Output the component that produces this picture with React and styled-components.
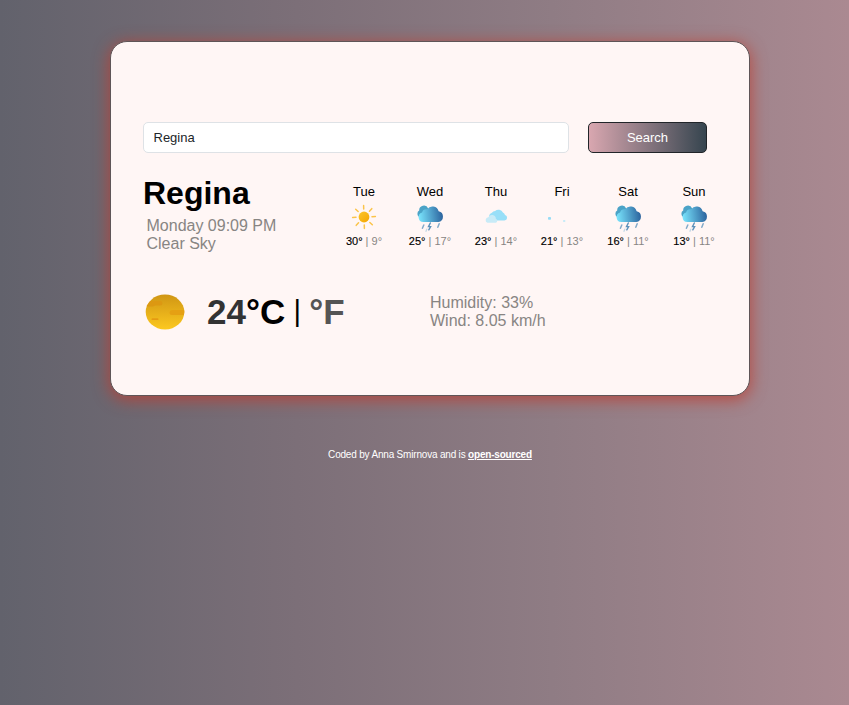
import React from "react";
import styled, { createGlobalStyle } from "styled-components";

const GlobalStyle = createGlobalStyle`
  *, *::before, *::after { box-sizing: border-box; }
  html { min-height: 100%; background: linear-gradient(to right, #62626c, #7c6f78 35%, #8f7c84 65%, #aa8991); }
  body { margin: 0; font-family: "Liberation Sans", Arial, sans-serif; color: #000; }
`;

const Page = styled.div`
  height: 705px;
  padding: 41px 0 0 110px;
`;

const Card = styled.main`
  width: 640px;
  height: 355px;
  padding: 80px 21px 0 32px;
  border: 1px solid #5f5557;
  border-radius: 17px;
  background: #fff6f5;
  box-shadow: 0 3px 16px 1px rgba(189, 63, 50, 0.8);
`;

const SearchForm = styled.form`
  display: flex;
  gap: 19px;
  height: 31px;
`;

const SearchInput = styled.input`
  width: 426px;
  height: 31px;
  padding: 0 9.5px;
  border: 1px solid #dee2e6;
  border-radius: 5px;
  background: #fff;
  color: #212529;
  font: 13px "Liberation Sans", Arial, sans-serif;
`;

const SearchButton = styled.button`
  width: 119px;
  height: 31px;
  padding: 0;
  border: 1px solid #212529;
  border-radius: 5px;
  background: linear-gradient(to right, #d9a7b0, #36454f);
  color: #fff;
  font: 13px "Liberation Sans", Arial, sans-serif;
`;

const Overview = styled.section`
  display: flex;
  height: 112px;
`;

const Place = styled.div`
  width: 188px;
  padding-top: 21px;
`;

const City = styled.h1`
  margin: 0 0 5px;
  font-size: 32px;
  line-height: 38px;
`;

const Details = styled.div`
  padding-left: ${(p) => p.$indent || 0}px;
  color: #888583;
  font-size: 16px;
  line-height: 18px;
`;

const Forecast = styled.div`
  display: grid;
  grid-template-columns: repeat(6, 66px);
  padding-top: 30px;
`;

const Day = styled.div`
  display: flex;
  flex-direction: column;
  align-items: center;
`;

const DayName = styled.div`
  height: 18px;
  font-size: 13px;
  line-height: 18px;
`;

const WeatherIcon = styled.svg`
  display: block;
  width: 32px;
  height: 32px;
`;

const Range = styled.div`
  font-size: 11px;
  line-height: 17px;
  white-space: nowrap;
`;

const High = styled.span`
  -webkit-text-stroke: 0.15px #000;
`;

const Low = styled.span`
  color: #888583;
`;

const Current = styled.section`
  display: flex;
  align-items: center;
  height: 94px;
`;

const CurrentIcon = styled.svg`
  width: 42px;
  height: 40px;
  margin-right: 22px;
`;

const Temperature = styled.div`
  display: flex;
  width: 223px;
  font-size: 35px;
  font-weight: 700;
  line-height: 40px;
  white-space: nowrap;
`;

const Value = styled.span`
  color: #333;
`;

const Divider = styled.span`
  width: 24px;
  font-size: 29px;
  font-weight: 400;
  line-height: 38px;
  text-align: center;
`;

const Fahrenheit = styled.span`
  color: #555;
`;

const Footer = styled.footer`
  width: 640px;
  padding-top: 52px;
  color: #fff;
  font-size: 10px;
  line-height: 14px;
  text-align: center;
  letter-spacing: -0.19px;
`;

const SourceLink = styled.a`
  color: #fff;
  font-weight: 700;
`;

const days = [
  { name: "Tue", icon: "sun", high: 30, low: 9 },
  { name: "Wed", icon: "rain", high: 25, low: 17 },
  { name: "Thu", icon: "cloud", high: 23, low: 14 },
  { name: "Fri", icon: "mist", high: 21, low: 13 },
  { name: "Sat", icon: "rain", high: 16, low: 11 },
  { name: "Sun", icon: "rain", high: 13, low: 11 },
];

const rays = [0, 45, 90, 135, 180, 225, 270, 315];

const drawings = {
  sun: (id) => (
    <>
      <defs>
        <linearGradient id={id} x1="0" y1="0" x2="1" y2="1">
          <stop stopColor="#fbc62d" />
          <stop offset="1" stopColor="#f5a500" />
        </linearGradient>
      </defs>
      <circle cx="16" cy="16" r="5.4" fill={`url(#${id})`} />
      {rays.map((a) => (
        <path key={a} d="M16 4.6v3.4" transform={`rotate(${a - 2} 16 16)`} stroke="#fbc44a" strokeWidth="1.5" strokeLinecap="round" />
      ))}
    </>
  ),
  rain: (id) => (
    <>
      <defs>
        <linearGradient id={id} x1="5" x2="29" y1="15" y2="12" gradientUnits="userSpaceOnUse">
          <stop stopColor="#78e2fb" />
          <stop offset="1" stopColor="#2a619c" />
        </linearGradient>
      </defs>
      <path d="M5.5 16a3.6 3.6 0 0 1-.3-6.4 4.7 4.7 0 0 1 9-2.2L12 16z" fill="#4ba3c7" />
      <path d="M9.3 21a4.9 4.9 0 0 1-1.2-9.6 4.5 4.5 0 0 1 5.1-3.1 6.3 6.3 0 0 1 11.4 1.9 5.5 5.5 0 0 1-.2 10.8z" fill={`url(#${id})`} />
      <g strokeLinecap="round" fill="none">
        <path d="M9.8 24 8.4 27.2M25.2 22.8 23.8 26.3" stroke="#82aaca" strokeWidth="1.5" />
        <path d="m16.3 22-1.8 3.6h2.1l-1.8 3.2" stroke="#5c91bb" strokeWidth="1.4" />
        <path d="M12.8 28.2 12 30.3" stroke="#c5d9e6" strokeWidth="1.3" />
      </g>
    </>
  ),
  cloud: () => (
    <>
      <path d="M11 19a4 4 0 0 1 .9-7.3 4.2 4.2 0 0 1 3.2-1.6 4.8 4.8 0 0 1 7.8 1.5 3.5 3.5 0 0 1 2.1 2.4 2.8 2.8 0 0 1-.5 5.5H12z" fill="#98dff8" />
      <path d="M7.5 21.8a2.9 2.9 0 0 1 .8-5.6 4 4 0 0 1 7.6 1.5 2.3 2.3 0 0 1 .1 4.1z" fill="#c8ebf7" />
    </>
  ),
  mist: () => (
    <>
      <rect x="2" y="16" width="3" height="2.7" rx=".8" fill="#98dcf6" />
      <rect x="17" y="19" width="2.4" height="2" rx=".7" fill="#c8ebf7" />
    </>
  ),
};

export default function App() {
  return (
    <Page>
      <GlobalStyle />
      <Card>
        <SearchForm onSubmit={(e) => e.preventDefault()}>
          <SearchInput defaultValue="Regina" aria-label="City" />
          <SearchButton>Search</SearchButton>
        </SearchForm>
        <Overview>
          <Place>
            <City>Regina</City>
            <Details $indent={3.5}>
              Monday 09:09 PM
              <br />
              Clear Sky
            </Details>
          </Place>
          <Forecast>
            {days.map((day) => (
              <Day key={day.name}>
                <DayName>{day.name}</DayName>
                <WeatherIcon viewBox="0 0 32 32">{drawings[day.icon](`fill-${day.name}`)}</WeatherIcon>
                <Range>
                  <High>{day.high}°</High>
                  <Low> | {day.low}°</Low>
                </Range>
              </Day>
            ))}
          </Forecast>
        </Overview>
        <Current>
          <CurrentIcon viewBox="0 0 42 40">
            <defs>
              <linearGradient id="globe" x1="0" x2="0" y1="0" y2="1">
                <stop stopColor="#cd9213" />
                <stop offset="1" stopColor="#ffcc21" />
              </linearGradient>
              <clipPath id="disc">
                <ellipse cx="22" cy="20" rx="19.3" ry="17.5" />
              </clipPath>
            </defs>
            <g clipPath="url(#disc)">
              <path d="M0 0h42v40H0z" fill="url(#globe)" />
              <path d="M2 9h15q2.5 0 2.5 2.2T17 13.5h-5l-2 1H0z" fill="#dc9812" />
              <path d="M29 18h14v5H29q-2.5 0-2.5-2.3T29 18z" fill="#e5a013" />
              <rect x="8.5" y="26.3" width="7" height="1.8" rx=".9" fill="#e59a12" />
            </g>
          </CurrentIcon>
          <Temperature>
            <Value>24</Value>
            <span>°C</span>
            <Divider>|</Divider>
            <Fahrenheit>°F</Fahrenheit>
          </Temperature>
          <Details>
            Humidity: 33%
            <br />
            Wind: 8.05 km/h
          </Details>
        </Current>
      </Card>
      <Footer>
        Coded by Anna Smirnova and is <SourceLink href="#">open-sourced</SourceLink>
      </Footer>
    </Page>
  );
}
